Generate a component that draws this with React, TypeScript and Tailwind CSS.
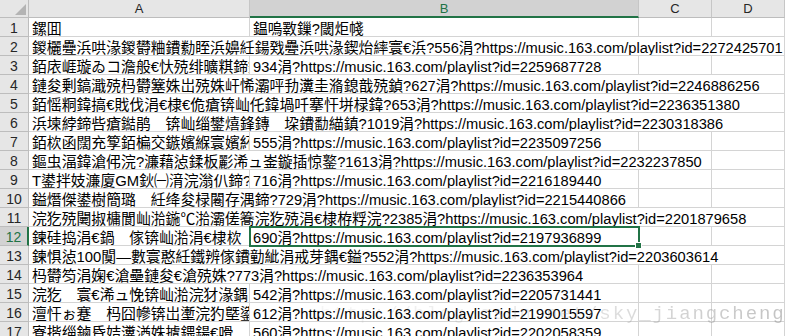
import clsx from "clsx";

type Row = {
  n: number;
  title: string;
  rest: string;
  split?: boolean; // A and B are separate cells
  span?: 1 | 2 | 3 | 4; // columns the overflowing A text covers
};

const URL = "https://music.163.com/playlist?id=";

const rows: Row[] = [
  { n: 1, title: "鏍囬", rest: "鎾嗚斁鏁?閾炬帴", split: true },
  { n: 2, title: "鍐欐疉浜哄湪鍐欎粬鐨勬眰浜嬶紝鍚戣疉浜哄湪鍥炲繂寰€浜", rest: `?556涓?${URL}2272425701`, span: 4 },
  { n: 3, title: "銆庡崕璇ゐコ澹般€忕殑绯曠粸鍗鏄", rest: `934涓?${URL}2259687728`, split: true },
  { n: 4, title: "鏈夋剰鎬濈殑杩欎簺姝岀殑姝屽悕灞呯劧瀵圭潃鎴戠殑鍞", rest: `?627涓?${URL}2246886256`, span: 4 },
  { n: 5, title: "銆愮粡鍏搞€戝伐涓€棣€佹瘡锛屾仛鍏堝吀搴忓垪椂鍏", rest: `?653涓?${URL}2236351380`, span: 4 },
  { n: 6, title: "浜堜綍鍗呰瘡鐑鹃　锛屾缁鐢熺鋒鏄　垜鐨勫緢鎮", rest: `?1019涓?${URL}2230318386`, span: 4 },
  { n: 7, title: "銆栨函闊充箰銆楄交鏃嬪緥寰嬪紑鐨勫", rest: `555涓?${URL}2235097256`, split: true },
  { n: 8, title: "鏂虫湢鍏滄伄浣?濂藉惉鍒板彲浠ュ崟鏇插惊鐜", rest: `?1613涓?${URL}2232237850`, span: 3 },
  { n: 9, title: "T鍙拌妓濂廈GM鈥㈠湇浣滃仈鍗?", rest: `716涓?${URL}2216189440`, split: true },
  { n: 10, title: "鎰熸傑鍙樹簡璐　紝绛夋椂闂存湡鍗", rest: `?729涓?${URL}2215440866`, span: 2 },
  { n: 11, title: "浣犵殑闄掓槦閬屾湁鍦℃湁灞傞簥浣犵殑涓€棣栫粰浣", rest: `?2385涓?${URL}2201879658`, span: 4 },
  { n: 12, title: "鍊硅捣涓€鍋　傢锛屾湁涓€棣栨", rest: `690涓?${URL}2197936899`, split: true },
  { n: 13, title: "鍊惧惉100闃―數寰憨紝鐵辨傢鐨勭紪涓戒芽鍝€鎰", rest: `?552涓?${URL}2203603614`, span: 4 },
  { n: 14, title: "杩欎笉涓婅€滄壘鏈夋€滄殑姝", rest: `?773涓?${URL}2236353964`, span: 2 },
  { n: 15, title: "浣犵　寰€浠ュ悗锛屾湁浣犲湪鍝", rest: `542涓?${URL}2205731441`, split: true },
  { n: 16, title: "澶忓ぉ蹇　杩囧幓锛岀壍浣犳墍鍌", rest: `612涓?${URL}2199015597`, split: true },
  { n: 17, title: "寮揩缁鏀昏姞瀵湭姝摣鍡鍚€嗗", rest: `560涓?${URL}2202058359`, split: true },
];

const colWidths = ["w-[221px]", "w-[389px]", "w-[73px]", "w-[73px]"];
const spanWidths = { 1: "w-[221px]", 2: "w-[610px]", 3: "w-[683px]", 4: "w-[756px]" };
const letters = ["A", "B", "C", "D"];

const SELECTED_ROW = 12;
const SELECTED_COL = 1;

const cellBase =
  "h-[19px] shrink-0 border-b border-r border-[#d4d4d4] pl-[3px] pt-[3px] leading-[16px] whitespace-nowrap overflow-hidden";

function Title({ text }: { text: string }) {
  return <span className="text-[14.85px]">{text}</span>;
}

function SheetRow({ row }: { row: Row }) {
  const selected = row.n === SELECTED_ROW;
  const span = row.split ? 1 : row.span ?? 1;

  return (
    <div className="flex">
      <div
        className={clsx(
          "h-[19px] w-[29px] shrink-0 border-b text-center text-[14px] leading-[16px] pt-[2px]",
          selected
            ? "bg-[#d2d2d2] text-[#217346] border-r-2 border-r-[#217346] border-b-[#bdbdbd]"
            : "bg-[#e6e6e6] text-[#262626] border-r border-[#bdbdbd]"
        )}
      >
        {row.n}
      </div>

      {row.split ? (
        <>
          <div className={clsx(cellBase, colWidths[0])}>
            <Title text={row.title} />
          </div>
          <div className={clsx(cellBase, colWidths[1])}>{row.rest}</div>
        </>
      ) : (
        <div className={clsx(cellBase, spanWidths[span])}>
          <Title text={row.title} />
          {row.rest}
        </div>
      )}

      {colWidths.slice(row.split ? 2 : span).map((w, i) => (
        <div key={i} className={clsx(cellBase, w)} />
      ))}
    </div>
  );
}

export default function App() {
  return (
    <div className="relative h-[336px] w-[785px] overflow-hidden bg-white text-[14.67px] text-black font-['Liberation_Sans','Noto_Sans_CJK_SC',sans-serif]">
      {/* column headers */}
      <div className="flex h-[18px]">
        <div className="h-[18px] w-[29px] shrink-0 border-b border-r border-[#bdbdbd] bg-[#e6e6e6]">
          <svg width="28" height="17" viewBox="0 0 28 17">
            <polygon points="15,15 26,15 26,4" fill="#b4b4b4" />
          </svg>
        </div>
        {letters.map((l, i) => (
          <div
            key={l}
            className={clsx(
              "h-[18px] shrink-0 border-r text-center text-[13px] leading-[17px]",
              colWidths[i],
              i === SELECTED_COL
                ? "bg-[#d2d2d2] text-[#217346] border-r-[#c6c6c6] border-b-2 border-b-[#217346]"
                : "bg-[#e6e6e6] text-[#262626] border-b border-[#c6c6c6] border-b-[#bdbdbd]"
            )}
          >
            {l}
          </div>
        ))}
      </div>

      {rows.map((r) => (
        <SheetRow key={r.n} row={r} />
      ))}

      {/* active cell B12 */}
      <div className="pointer-events-none absolute left-[249px] top-[226px] h-[21px] w-[391px] border-2 border-[#217346]" />
      <div className="pointer-events-none absolute left-[635px] top-[242px] h-[7px] w-[7px] border border-white bg-[#217346]" />

      {/* blog watermark, fades in towards the right */}
      <div className="pointer-events-none absolute left-[320px] top-[303px] bg-linear-to-r from-[#a0a0a0]/10 via-[#a0a0a0]/25 to-[#909090]/55 bg-clip-text text-[19px] leading-[22px] tracking-[1.9px] text-transparent font-['Liberation_Mono',monospace]">
        http://blog.csdn.net/sky_jiangcheng
      </div>
    </div>
  );
}
